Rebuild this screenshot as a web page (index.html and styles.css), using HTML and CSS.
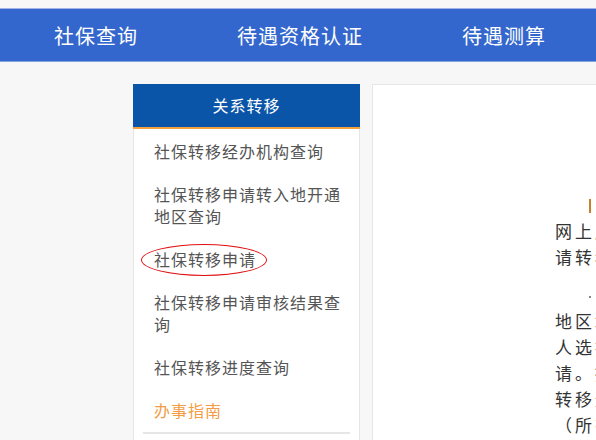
FILE: index.html
```html
<!DOCTYPE html>
<html lang="zh-CN">
<head>
  <meta charset="UTF-8" />
  <meta name="viewport" content="width=device-width, initial-scale=1.0" />
  <title>关系转移</title>
  <link rel="stylesheet" href="styles.css">
</head>
<body>
  <div class="topnav">
    <a href="#">社保查询</a>
    <a href="#">待遇资格认证</a>
    <a href="#">待遇测算</a>
  </div>

  <div class="main">
    <!-- left menu -->
    <div class="side">
      <div class="side-hd">关系转移</div>
      <ul class="side-menu">
        <li><a href="#">社保转移经办机构查询</a></li>
        <li><a href="#">社保转移申请转入地开通地区查询</a></li>
        <li><a href="#"><span class="circled">社保转移申请</span></a></li>
        <li><a href="#">社保转移申请审核结果查询</a></li>
        <li><a href="#">社保转移进度查询</a></li>
        <li class="guide"><a href="#">办事指南</a></li>
        <li class="sep"></li>
      </ul>
    </div>

    <!-- content -->
    <div class="content">
      <div class="article">
        <p><span class="mark"></span><span class="hl">网上申请：</span>参保人在网上服务平台填写并提交申请转移接续。</p>
        <p><span class="dot"></span>需转出和转入的统筹地区均已开通网上业务，本人选择转入地后方可提交申请。提交后可在本系统查询转移进度和审核结果信息。（所有业务均免费办理）</p>
      </div>
    </div>
  </div>
</body>
</html>
```

FILE: styles.css
```css
html, body {
  overflow: hidden;
}
body {
  margin: 0;
  background: #f7f7f7;
  font-family: "Noto Sans CJK SC", "Microsoft YaHei", sans-serif;
  color: #333;
}
a {
  text-decoration: none;
  color: inherit;
}

.topnav {
  margin-top: 8px;
  height: 52px;
  background: #3467cd;
  border-top: 1px solid #9fb3ea;
  border-bottom: 1px solid #86a1e2;
  display: flex;
  align-items: center;
  margin-left: -6px;
}
.topnav a {
  flex: 0 0 204px;
  text-align: center;
  color: #fff;
  font-size: 20px;
  letter-spacing: 1px;
}

.main {
  display: flex;
  gap: 12px;
  padding: 22px 0 0 133px;
}

.side {
  flex: 0 0 227px;
}
.side-hd {
  height: 43px;
  line-height: 43px;
  background: #0a55a7;
  border-bottom: 2px solid #f4a23e;
  color: #fff;
  font-size: 16px;
  letter-spacing: 1px;
  text-align: center;
}
.side-menu {
  list-style: none;
  margin: 0;
  padding: 1px 0 0;
  background: #fff;
  border: 1px solid #e5e5e5;
  border-top: 0;
}
.side-menu li a {
  display: block;
  padding: 10px 14px 11px 20px;
  font-size: 16px;
  line-height: 22px;
  letter-spacing: 1px;
  color: #555;
}
.side-menu li.guide a {
  color: #f39c45;
}
.side-menu li.sep {
  margin: 0 9px;
  height: 30px;
  border-top: 2px solid #e6e6e6;
}
.circled {
  position: relative;
  display: inline-block;
}
.circled::after {
  content: "";
  position: absolute;
  left: -13px;
  right: -11px;
  top: -4px;
  bottom: -6px;
  border: 1.5px solid #e01010;
  border-radius: 50%;
}

.content {
  flex: 0 0 700px;
  min-height: 500px;
  background: #fff;
  border: 1px solid #e6e6e6;
}
.article {
  width: 242px;
  padding: 107px 0 0 182px;
}
.article p {
  margin: 0 0 12px;
  font-size: 17px;
  line-height: 26px;
  letter-spacing: 3px;
  text-indent: 34px;
  color: #333;
}
.article .mark {
  display: inline-block;
  width: 2px;
  height: 14px;
  margin-right: 10px;
  background: #c9802c;
  vertical-align: -1px;
}
.article .dot {
  display: inline-block;
  width: 2px;
  height: 2px;
  margin-right: 10px;
  background: #888;
  vertical-align: 4px;
}
.article .hl {
  color: #c9802c;
  font-weight: bold;
}
```
